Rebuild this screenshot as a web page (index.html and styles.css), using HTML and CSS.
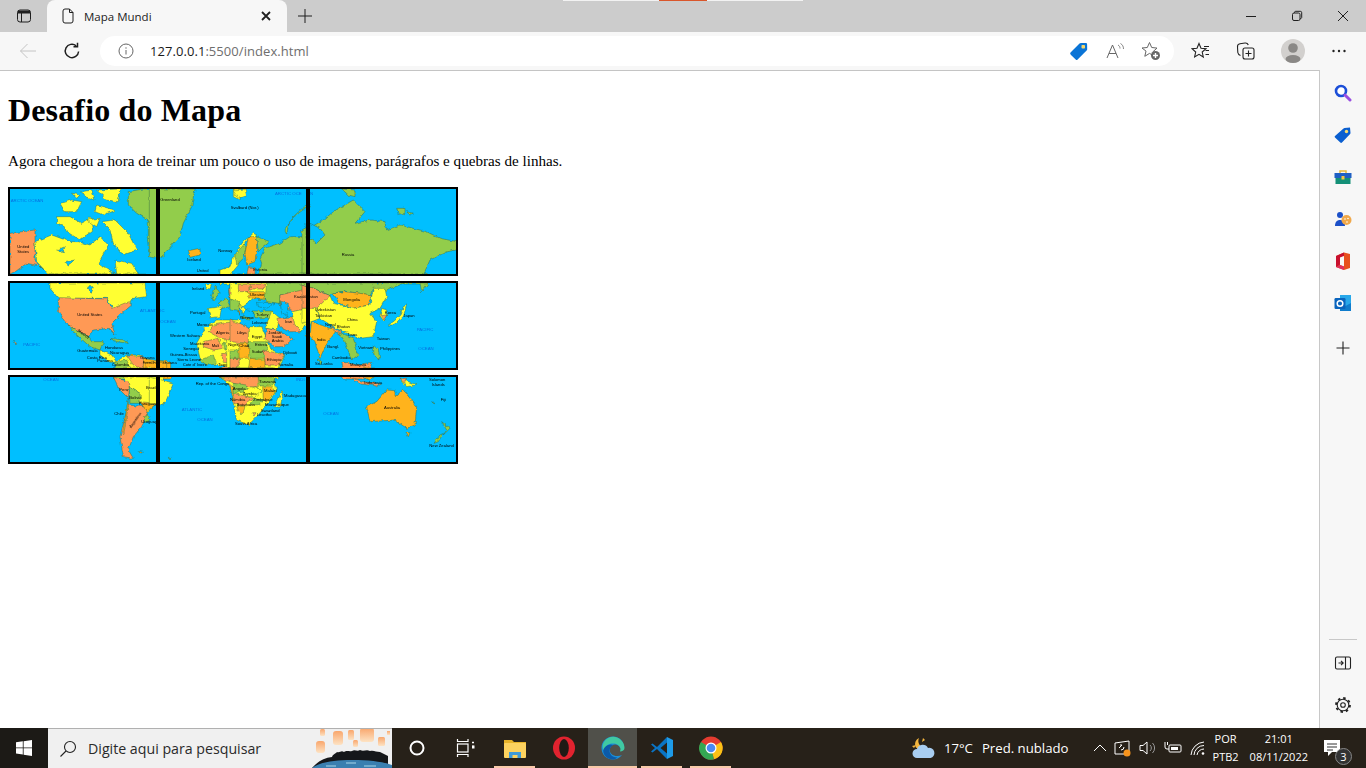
FILE: index.html
```html
<!DOCTYPE html>
<html lang="pt-BR">
<head>
    <meta charset="UTF-8">
    <meta name="viewport" content="width=device-width, initial-scale=1.0">
    <title>Mapa Mundi</title>
    <link rel="stylesheet" href="styles.css">
</head>
<body>

<div class="top-sliver"><span class="sliver-mid"></span></div>

<!-- barra de abas -->
<div class="tabstrip">
    <div class="tab-side">
        <svg width="16" height="16" viewBox="0 0 16 16" class="ico"><rect x="1.5" y="2" width="13" height="12" rx="2.5"/><path d="M1.5 5h13M5.5 5v9" /><path d="M2 2.6h12v2.4H2z" class="solid"/></svg>
    </div>
    <div class="tab">
        <svg width="16" height="16" viewBox="0 0 16 16" class="ico"><path d="M3 3a2 2 0 0 1 2-2h4.5L13 4.5V13a2 2 0 0 1-2 2H5a2 2 0 0 1-2-2z"/><path d="M9.5 1v3.5H13"/></svg>
        <span class="tab-title">Mapa Mundi</span>
        <svg width="10" height="10" viewBox="0 0 10 10" class="ico thick"><path d="M1 1l8 8M9 1l-8 8"/></svg>
    </div>
    <div class="new-tab">
        <svg width="16" height="16" viewBox="0 0 16 16" class="ico"><path d="M8 1v14M1 8h14"/></svg>
    </div>
    <div class="win-controls">
        <div class="win-btn"><svg width="12" height="12" viewBox="0 0 12 12" class="ico"><path d="M1 6.5h10"/></svg></div>
        <div class="win-btn"><svg width="12" height="12" viewBox="0 0 12 12" class="ico"><rect x="1.5" y="3" width="7.5" height="7.5" rx="1.5"/><path d="M3.5 3V2.5a1.2 1.2 0 0 1 1.2-1.2h4.6a1.4 1.4 0 0 1 1.4 1.4v4.6A1.2 1.2 0 0 1 9 8.5"/></svg></div>
        <div class="win-btn"><svg width="12" height="12" viewBox="0 0 12 12" class="ico"><path d="M1 1l10 10M11 1L1 11"/></svg></div>
    </div>
</div>

<!-- barra de endereco -->
<div class="toolbar">
    <div class="tool tool-back">
        <svg width="18" height="18" viewBox="0 0 18 18" class="ico faded"><path d="M17 9H1.5M8.5 2L1.5 9l7 7"/></svg>
    </div>
    <div class="tool">
        <svg width="18" height="18" viewBox="0 0 18 18" class="ico big"><path d="M15.6 9.5A6.7 6.7 0 1 1 13.2 3.8"/><path d="M14.5 0.8v4h-4"/></svg>
    </div>
    <div class="address">
        <svg width="16" height="16" viewBox="0 0 16 16" class="ico grey addr-info"><circle cx="8" cy="8" r="7"/><path d="M8 7v4.5M8 4.3v1.4"/></svg>
        <span class="url"><b>127.0.0.1</b>:5500/index.html</span>
        <div class="addr-icons">
            <svg width="20" height="20" viewBox="0 0 20 20"><path d="M1.5 11.5L10.5 2.5a2 2 0 0 1 1.4-.6l5 .1a1.2 1.2 0 0 1 1.2 1.2l.1 5a2 2 0 0 1-.6 1.4l-9 9a1.3 1.3 0 0 1-1.9 0l-4.700-4.700a1.700 1.700 0 0 1-.5-2.400z" fill="#0a74d6"/><rect x="12.500" y="4" width="3.500" height="3.500" rx=".8" fill="#f5d76a"/></svg>
            <svg width="20" height="20" viewBox="0 0 20 20" class="ico grey"><path d="M2 17L7.500 4 13 17M4 12.500h7"/><path d="M13 4c1.500.8 2 2 2 3.500M15.500 2.500c2 1.200 3 3 3 5.500" class="thin"/></svg>
            <svg width="20" height="20" viewBox="0 0 20 20" class="ico grey"><path d="M8.500 1.500l2.200 5 5.300.6-4 3.600 1 4.200-4.500-2.500-4.700 2.900 1.200-5.200L1 7l5.300-.5z"/><circle cx="14.500" cy="14.500" r="4.500" fill="#666" stroke="none"/><path d="M14.500 12v5M12 14.500h5" class="white"/></svg>
        </div>
    </div>
    <div class="tool-right">
        <svg width="20" height="20" viewBox="0 0 20 20" class="ico dark"><path d="M8 2.500l2 4.700 5 .5-3.800 3.300 1.100 5-4.300-2.600-4.400 2.600 1.100-5L1 7.700l5-.5z"/><path d="M13 5.500h5M14.500 9.500h3.500M14.500 13.500h3.500"/></svg>
        <svg width="20" height="20" viewBox="0 0 20 20" class="ico dark"><rect x="7" y="7" width="11" height="11" rx="2"/><path d="M12.500 9.500v6M9.500 12.500h6M4.500 14.500C3 14 2 12.800 1.800 11.500L1.500 6a3 3 0 0 1 2.500-3.300L9 2c1.500-.2 2.800.7 3.300 2"/></svg>
        <div class="avatar">
            <svg width="24" height="24" viewBox="0 0 24 24"><circle cx="12" cy="12" r="12" fill="#d2d0ce"/><circle cx="12" cy="9" r="4.800" fill="#8a8886"/><ellipse cx="12" cy="20" rx="7.500" ry="4" fill="#8a8886"/></svg>
        </div>
        <svg width="20" height="20" viewBox="0 0 20 20" class="dots"><circle cx="4.500" cy="10" r="1.200"/><circle cx="10" cy="10" r="1.200"/><circle cx="15.500" cy="10" r="1.200"/></svg>
    </div>
</div>

<div class="main">
    <div class="page">
        <h1>Desafio do Mapa</h1>
        <p>Agora chegou a hora de treinar um pouco o uso de imagens, parágrafos e quebras de linhas.</p>

        <!-- os continentes ficam uma vez so, cada quadro recorta um pedaco -->
        <svg class="world-def" width="0" height="0">
            <filter id="rough" x="-30%" y="-30%" width="160%" height="160%">
                <feTurbulence type="fractalNoise" baseFrequency=".08" numOctaves="2" seed="4"/>
                <feDisplacementMap in="SourceGraphic" scale="11" xChannelSelector="R" yChannelSelector="G"/>
            </filter>
            <symbol id="world" viewBox="0 0 438 255" width="438" height="255">
                <g class="land" transform="translate(-10 -9) scale(.3333)">
                    <polygon class="o" points="30,160 105,150 105,245 135,272 120,258 80,250 50,272 30,282"/>
                    <polygon class="y" points="105,185 155,165 210,185 235,185 270,195 300,170 325,195 295,250 345,282 145,282 110,245"/>
                    <polygon class="y" points="180,70 215,60 245,65 230,95 195,95"/>
                    <polygon class="y" points="215,40 240,45 230,55"/>
                    <polygon class="y" points="245,35 275,30 285,60 255,50"/>
                    <polygon class="y" points="290,30 360,27 355,65 320,60"/>
                    <polygon class="y" points="290,75 345,90 310,105 285,95"/>
                    <polygon class="y" points="170,110 210,110 245,130 265,115 275,115 280,150 240,180 200,155 190,135 170,130"/>
                    <polygon class="y" points="305,125 345,120 385,160 410,210 370,225 340,190 330,150"/>
                    <polygon class="y" points="260,120 300,115 290,140"/>
                    <polygon class="y" points="345,240 395,250 415,282 350,282"/>
                    <polygon class="s" points="170,210 195,200 190,215"/>
                    <polygon class="s" points="195,245 225,240 205,255"/>
                    <polygon class="g" points="385,35 430,27 480,27 480,235 468,225 450,225 445,170 445,120 410,100 385,75"/>
                </g>
                <g class="land" transform="translate(-14 -9) scale(.3333)">
                    <polygon class="g" points="460,27 585,27 575,80 550,130 540,170 480,235 460,230"/>
                    <polygon class="a" points="565,212 600,205 600,225 570,232"/>
                    <polygon class="y" points="700,27 720,27 720,60 700,50"/>
                </g>
                <g class="land" transform="translate(216 -9) scale(.3333)">
                    <polygon class="y" points="8,30 45,27 50,48 25,55"/>
                    <polygon class="g" points="228,170 240,285 85,285 95,250 90,235 105,205 150,190 180,170"/>
                    <polygon class="y" points="-30,270 0,260 15,220 40,185 70,160 80,165 50,180 30,220 25,255 0,285 -30,285"/>
                    <polygon class="g" points="15,225 40,195 50,200 40,235 20,255"/>
                    <polygon class="a" points="55,170 80,170 80,210 75,245 50,255 45,220"/>
                    <polygon class="g" points="80,170 120,185 95,205 85,215"/>
                    <polygon class="o" points="55,262 75,262 75,285 50,285"/>
                    <polygon class="g" points="170,160 180,120 225,85 228,75 190,110 165,150"/>
                </g>
                <g class="land" transform="translate(212 -9) scale(.3333)">
                    <polygon class="g" points="228,150 280,120 310,95 370,60 405,95 375,130 420,120 465,125 470,150 510,135 590,155 630,175 680,185 680,210 650,215 600,240 580,285 228,285"/>
                    <polygon class="s" points="240,130 270,145 285,165 260,190 240,175"/>
                    <polygon class="g" points="500,85 525,85 525,100 505,103"/>
                    <polygon class="g" points="335,27 375,30 375,50 355,45"/>
                    <polygon class="g" points="530,95 550,100 540,105"/>
                </g>
                <g class="land" transform="translate(-10 77) scale(.3333)">
                    <polygon class="y" points="150,24 435,24 440,65 400,70 390,85 340,100 320,70 175,70 150,40"/>
                    <polygon class="s" points="262,35 280,35 275,55"/>
                    <polygon class="o" points="175,68 320,72 335,100 385,80 395,90 360,120 335,145 345,180 325,160 280,165 265,185 205,150 175,110"/>
                    <polygon class="g" points="205,150 265,185 275,200 310,200 300,225 270,215 225,175"/>
                    <polygon class="y" points="300,225 335,240 350,262 330,262 300,240"/>
                    <polygon class="g" points="330,190 370,195 385,205 350,200"/>
                    <polygon class="y" points="345,262 380,240 420,240 420,285 345,285"/>
                    <polygon class="o" points="380,240 430,245 450,260 430,285 400,270"/>
                    <polygon class="g" points="345,262 380,255 395,285 345,285"/>
                    <polygon class="a" points="430,250 500,262 500,285 430,285"/>
                    <polygon class="o" points="40,200 50,205 48,210"/>
                </g>
                <g class="land" transform="translate(-14 77) scale(.3333)">
                    <polygon class="a" points="450,262 500,262 500,285 450,285"/>
                    <polygon class="y" points="590,205 615,160 650,135 720,135 720,285 640,265 600,250"/>
                    <polygon class="o" points="640,150 695,140 700,195 660,190 625,170"/>
                    <polygon class="o" points="610,200 655,190 670,220 640,225 610,215"/>
                    <polygon class="g" points="670,205 720,195 720,230 675,225"/>
                    <polygon class="o" points="665,235 720,240 710,265 670,262"/>
                    <polygon class="g" points="600,255 640,240 650,268 620,270"/>
                    <polygon class="y" points="625,100 665,95 660,125 630,128"/>
                    <polygon class="g" points="645,30 660,55 640,80 635,60"/>
                    <polygon class="y" points="620,30 635,28 630,42 618,40"/>
                    <polygon class="g" points="655,85 680,70 690,95 665,100"/>
                    <polygon class="o" points="685,40 720,40 720,65 690,70"/>
                    <polygon class="y" points="690,30 720,24 720,40 690,40"/>
                    <polygon class="o" points="690,70 720,75 720,120 705,85"/>
                </g>
                <g class="land" transform="translate(216 77) scale(.3333)">
                    <polygon class="g" points="100,24 240,24 240,50 150,60 150,85 110,80 95,40"/>
                    <polygon class="y" points="0,24 110,24 105,75 70,70 30,100 0,90"/>
                    <polygon class="o" points="25,28 60,28 60,50 25,50"/>
                    <polygon class="o" points="60,28 105,28 100,42 62,42"/>
                    <polygon class="a" points="50,50 105,50 105,72 80,72 60,68"/>
                    <polygon class="o" points="150,60 240,40 240,100 195,110 150,90"/>
                    <polygon class="g" points="0,72 28,80 28,110 0,105"/>
                    <polygon class="y" points="-10,195 60,155 95,155 125,225 165,240 145,285 -10,285"/>
                    <polygon class="o" points="0,135 55,155 55,205 0,200"/>
                    <polygon class="a" points="25,205 58,205 55,250 28,250"/>
                    <polygon class="g" points="55,200 110,200 115,250 60,250"/>
                    <polygon class="o" points="100,225 165,240 145,270 105,270"/>
                    <polygon class="o" points="0,250 30,250 20,285 0,285"/>
                    <polygon class="g" points="0,225 25,225 25,250 0,250"/>
                    <polygon class="a" points="60,250 105,255 105,285 55,285"/>
                    <polygon class="g" points="70,108 128,108 125,128 75,128"/>
                    <polygon class="y" points="125,108 150,130 140,165 105,160"/>
                    <polygon class="o" points="140,130 190,125 215,170 175,170 150,155"/>
                    <polygon class="o" points="110,160 150,170 190,192 160,215 130,215 105,190"/>
                    <polygon class="y" points="185,110 240,100 240,130 215,170 195,150"/>
                    <polygon class="s" points="82,80 135,85 110,100 85,95"/>
                    <polygon class="s" points="150,78 175,85 170,125 155,115"/>
                    <polygon class="s" points="30,100 70,108 70,130 30,125"/>
                    <polygon class="y" points="28,85 45,105 40,118"/>
                    <polygon class="g" points="35,125 60,128 60,135 38,132"/>
                </g>
                <g class="land" transform="translate(212 77) scale(.3333)">
                    <polygon class="g" points="228,24 525,24 470,45 430,40 420,60 345,48 305,55 300,62 228,30"/>
                    <polygon class="o" points="228,30 300,62 300,85 260,100 228,100"/>
                    <polygon class="y" points="228,100 260,100 270,130 245,140 228,145"/>
                    <polygon class="a" points="305,55 345,50 390,55 425,60 415,90 370,100 330,85"/>
                    <polygon class="y" points="260,100 300,62 310,85 370,100 420,90 430,40 465,40 470,65 450,100 420,115 440,140 430,185 390,190 340,170 310,155 270,130"/>
                    <polygon class="a" points="245,140 300,160 320,165 285,215 270,250 255,200 240,180"/>
                    <polygon class="o" points="300,155 335,170 330,180 310,165"/>
                    <polygon class="g" points="325,170 370,190 385,240 365,255 345,200"/>
                    <polygon class="y" points="455,100 470,105 470,120 460,140 450,125"/>
                    <polygon class="o" points="452,122 470,120 462,135"/>
                    <polygon class="y" points="475,150 510,120 520,95 530,90 520,125 490,150"/>
                    <polygon class="g" points="430,210 445,225 450,255 432,240"/>
                    <polygon class="o" points="335,260 380,270 425,262 420,285 340,285"/>
                    <polygon class="g" points="265,255 275,258 272,270"/>
                    <polygon class="g" points="570,24 595,24 575,50"/>
                </g>
                <g class="land" transform="translate(-10 163) scale(.3333)">
                    <polygon class="y" points="370,21 480,21 480,105 468,100 440,130 420,95 420,70 388,50"/>
                    <polygon class="o" points="340,21 385,35 388,55 385,85 360,60"/>
                    <polygon class="g" points="388,50 420,70 420,100 390,100"/>
                    <polygon class="a" points="420,95 470,100 440,125"/>
                    <polygon class="o" points="385,105 430,110 445,130 425,170 400,200 385,240 400,265 370,260 360,200"/>
                    <polygon class="a" points="385,85 385,105 372,190 368,190"/>
                    <polygon class="g" points="430,140 445,135 450,150 435,158"/>
                    <polygon class="a" points="418,245 430,247 420,250"/>
                </g>
                <g class="land" transform="translate(-14 163) scale(.3333)">
                    <polygon class="y" points="460,21 520,40 495,100 460,105"/>
                    <polygon class="g" points="505,262 515,268 508,268"/>
                    <polygon class="o" points="660,21 720,21 720,50 690,50 680,35"/>
                    <polygon class="a" points="690,50 720,50 720,125 700,90"/>
                </g>
                <g class="land" transform="translate(216 163) scale(.3333)">
                    <polygon class="y" points="-30,21 130,21 140,60 115,100 80,140 55,165 20,150 10,100 8,50"/>
                    <polygon class="o" points="-30,21 85,21 85,50 35,50 10,40"/>
                    <polygon class="g" points="85,21 135,21 130,45 90,48"/>
                    <polygon class="g" points="10,40 50,45 50,65 10,70"/>
                    <polygon class="y" points="40,60 80,50 95,65 75,80 45,80"/>
                    <polygon class="a" points="98,50 125,50 135,65 110,95 100,90"/>
                    <polygon class="o" points="10,70 45,78 70,85 40,108 12,100"/>
                    <polygon class="g" points="70,85 100,90 85,105 60,102"/>
                    <polygon class="a" points="20,110 45,108 40,130 30,130"/>
                    <polygon class="o" points="65,128 78,128 72,138"/>
                    <polygon class="y" points="135,110 155,65 160,70 150,112"/>
                </g>
                <g class="land" transform="translate(212 163) scale(.3333)">
                    <polygon class="a" points="410,110 440,95 470,60 495,62 495,80 520,60 560,110 555,165 530,175 495,150 420,155"/>
                    <polygon class="a" points="528,188 540,188 535,200"/>
                    <polygon class="o" points="360,21 400,35 455,42 440,48 390,42"/>
                    <polygon class="a" points="400,21 430,21 420,30"/>
                    <polygon class="y" points="510,25 560,45 530,50"/>
                    <polygon class="o" points="510,25 530,25 525,38"/>
                    <polygon class="g" points="635,155 660,175 640,195 650,180"/>
                    <polygon class="g" points="640,190 625,215 612,220 630,195"/>
                    <polygon class="g" points="605,95 618,102 610,100"/>
                </g>
            </symbol>
        </svg>

        <div class="map">
            <svg class="tile" viewBox="0 0 146 85">
                <use href="#world"/>
                <g class="labels" transform="translate(-10 -9) scale(.3333)">
                    <text class="oc" x="32" y="66">ARCTIC OCEAN</text>
                    <text class="lb" x="52" y="204">United</text>
                    <text class="lb" x="52" y="219">States</text>
                </g>
            </svg>
            <svg class="tile" viewBox="146 0 146 85">
                <use href="#world"/>
                <g class="labels" transform="translate(-14 -9) scale(.3333)">
                    <text class="lb" x="481" y="64">Greenland</text>
                    <text class="lb" x="562" y="242">Iceland</text>
                    <text class="lb" x="655" y="215">Norway</text>
                    <text class="lb" x="590" y="276">United</text>
                </g>
                <g class="labels" transform="translate(216 -9) scale(.3333)">
                    <text class="lb" x="2" y="86">Svalbard (Nor.)</text>
                    <text class="oc" x="135" y="44">ARCTIC OCE</text>
                    <text class="lb" x="70" y="272">Estonia</text>
                </g>
            </svg>
            <svg class="tile" viewBox="292 0 146 85">
                <use href="#world"/>
                <g class="labels" transform="translate(212 -9) scale(.3333)">
                    <text class="oc" x="240" y="44">N</text>
                    <text class="lb" x="335" y="228">Russia</text>
                </g>
            </svg>

            <svg class="tile" viewBox="0 85 146 85">
                <use href="#world"/>
                <g class="labels" transform="translate(-10 77) scale(.3333)">
                    <text class="lb" x="232" y="122">United States</text>
                    <text class="oc" x="70" y="214">PACIFIC</text>
                    <text class="oc" x="420" y="112">ATLANT</text>
                    <text class="lb" x="232" y="232">Guatemala</text>
                    <text class="lb" x="315" y="222">Honduras</text>
                    <text class="lb" x="330" y="236">Nicaragua</text>
                    <text class="lb" x="260" y="251">Costa Rica</text>
                    <text class="lb" x="292" y="262">Panama</text>
                    <text class="lb" x="335" y="274">Colombia</text>
                    <text class="lb" x="420" y="251">Guyana</text>
                    <text class="lb" x="428" y="266">French</text>
                    <text class="lb" transform="rotate(35 235 165)" x="235" y="170">Mexico</text>
                </g>
            </svg>
            <svg class="tile" viewBox="146 85 146 85">
                <use href="#world"/>
                <g class="labels" transform="translate(-14 77) scale(.3333)">
                    <text class="oc" x="481" y="112">IC</text>
                    <text class="oc" x="481" y="145">OCEAN</text>
                    <text class="lb" x="490" y="266">Guiana</text>
                    <text class="lb" x="575" y="44">Ireland</text>
                    <text class="lb" x="570" y="117">Portugal</text>
                    <text class="lb" x="590" y="154">Morocco</text>
                    <text class="lb" x="510" y="187">Western Sahara</text>
                    <text class="lb" x="570" y="211">Mauritania</text>
                    <text class="lb" x="550" y="225">Senegal</text>
                    <text class="lb" x="510" y="244">Guinea-Bissau</text>
                    <text class="lb" x="532" y="257">Sierra Leone</text>
                    <text class="lb" x="548" y="274">Cote d' Ivoire</text>
                    <text class="lb" x="655" y="274">Togo</text>
                    <text class="lb" x="648" y="176">Algeria</text>
                    <text class="lb" x="635" y="217">Mali</text>
                    <text class="lb" x="685" y="212">Niger</text>
                </g>
                <g class="labels" transform="translate(216 77) scale(.3333)">
                    <text class="lb" x="60" y="62">Ukraine</text>
                    <text class="lb" x="78" y="122">Turkey</text>
                    <text class="lb" x="165" y="144">Iran</text>
                    <text class="lb" x="30" y="132">Greece</text>
                    <text class="lb" x="65" y="147">Lebanon</text>
                    <text class="lb" x="20" y="177">Libya</text>
                    <text class="lb" x="65" y="189">Egypt</text>
                    <text class="lb" x="115" y="176">Jordan</text>
                    <text class="lb" x="125" y="189">Saudi</text>
                    <text class="lb" x="125" y="202">Arabia</text>
                    <text class="lb" x="75" y="212">Eritrea</text>
                    <text class="lb" x="65" y="234">Sudan</text>
                    <text class="lb" x="28" y="216">Chad</text>
                    <text class="lb" x="110" y="259">Ethiopia</text>
                    <text class="lb" x="160" y="236">Djibouti</text>
                    <text class="lb" x="145" y="274">Somalia</text>
                    <text class="lb" x="192" y="70">Kazakh</text>
                </g>
            </svg>
            <svg class="tile" viewBox="292 85 146 85">
                <use href="#world"/>
                <g class="labels" transform="translate(212 77) scale(.3333)">
                    <text class="lb" x="240" y="70">stan</text>
                    <text class="lb" x="340" y="78">Mongolia</text>
                    <text class="lb" x="350" y="139">China</text>
                    <text class="lb" x="260" y="199">India</text>
                    <text class="lb" x="285" y="154">Nepal</text>
                    <text class="lb" x="320" y="160">Bhutan</text>
                    <text class="lb" x="355" y="182">Laos</text>
                    <text class="lb" x="465" y="117">Korea</text>
                    <text class="lb" x="520" y="126">Japan</text>
                    <text class="lb" x="440" y="194">Taiwan</text>
                    <text class="lb" x="385" y="222">Vietnam</text>
                    <text class="lb" x="450" y="226">Philippines</text>
                    <text class="lb" x="305" y="252">Cambodia</text>
                    <text class="lb" x="292" y="219">Bangl.</text>
                    <text class="lb" x="255" y="269">Sri Lanka</text>
                    <text class="lb" x="360" y="274">Malaysia</text>
                    <text class="lb" x="255" y="109">Uzbekistan</text>
                    <text class="lb" x="255" y="126">Tajikistan</text>
                    <text class="oc" x="560" y="167">PACIFIC</text>
                    <text class="oc" x="565" y="224">OCEAN</text>
                </g>
            </svg>

            <svg class="tile" viewBox="0 170 146 85">
                <use href="#world"/>
                <g class="labels" transform="translate(-10 163) scale(.3333)">
                    <text class="oc" x="130" y="33">OCEAN</text>
                    <text class="lb" x="438" y="56">Brazil</text>
                    <text class="lb" x="358" y="64">Peru</text>
                    <text class="lb" x="388" y="86">Bolivia</text>
                    <text class="lb" x="416" y="106">Paraguay</text>
                    <text class="lb" x="343" y="134">Chile</text>
                    <text class="lb" x="424" y="159">Uruguay</text>
                    <text class="lb" transform="rotate(-55 405 150)" x="378" y="154">Argentina</text>
                </g>
            </svg>
            <svg class="tile" viewBox="146 170 146 85">
                <use href="#world"/>
                <g class="labels" transform="translate(-14 163) scale(.3333)">
                    <text class="lb" x="587" y="46">Rep. of the Congo</text>
                    <text class="oc" x="545" y="122">ATLANTIC</text>
                    <text class="oc" x="592" y="154">OCEAN</text>
                </g>
                <g class="labels" transform="translate(216 163) scale(.3333)">
                    <text class="lb" x="88" y="39">Tanzania</text>
                    <text class="lb" x="8" y="59">Angola</text>
                    <text class="lb" x="38" y="74">Zambia</text>
                    <text class="lb" x="0" y="94">Namibia</text>
                    <text class="lb" x="20" y="109">Botswana</text>
                    <text class="lb" x="70" y="92">Zimbabwe</text>
                    <text class="lb" x="102" y="66">Malawi</text>
                    <text class="lb" x="162" y="82">Madagascar</text>
                    <text class="lb" x="105" y="107">Mozambique</text>
                    <text class="lb" x="92" y="126">Swaziland</text>
                    <text class="lb" x="80" y="139">Lesotho</text>
                    <text class="lb" x="15" y="164">South Africa</text>
                    <text class="oc" x="198" y="33">INDI</text>
                </g>
            </svg>
            <svg class="tile" viewBox="292 170 146 85">
                <use href="#world"/>
                <g class="labels" transform="translate(212 163) scale(.3333)">
                    <text class="oc" x="280" y="134">OCEAN</text>
                    <text class="lb" x="462" y="116">Australia</text>
                    <text class="lb" x="403" y="42">Indonesia</text>
                    <text class="lb" x="597" y="34">Solomon</text>
                    <text class="lb" x="605" y="47">Islands</text>
                    <text class="lb" x="632" y="92">Fiji</text>
                    <text class="lb" x="598" y="232">New Zealand</text>
                </g>
            </svg>
        </div>
    </div>

    <!-- barra lateral do edge -->
    <div class="sidebar">
        <div class="side-top">
            <svg width="18" height="18" viewBox="0 0 18 18"><circle cx="7" cy="7" r="5" fill="#fff" stroke="#1c4fd8" stroke-width="2.600"/><path d="M11 11l5 5" stroke="#9a4fe0" stroke-width="3" stroke-linecap="round"/></svg>
            <svg width="18" height="18" viewBox="0 0 18 18"><path d="M1 10L9.500 2.500a1.500 1.500 0 0 1 1-.4l5.500-.6.500 5.500a1.500 1.500 0 0 1-.4 1L8 16.500a1.200 1.200 0 0 1-1.700 0L1 11.500a1 1 0 0 1 0-1.500z" fill="#0b5fd0"/><circle cx="12.500" cy="5.500" r="1.700" fill="#f7dc6f"/></svg>
            <svg width="18" height="18" viewBox="0 0 18 18"><path d="M6 5V3h6v2" fill="none" stroke="#e8b93c" stroke-width="1.500"/><rect x="0.500" y="5" width="17" height="5" fill="#1f5fc4"/><rect x="1.500" y="10" width="15" height="6" fill="#149077"/><rect x="7.500" y="8" width="3" height="3.500" fill="#f3c744"/></svg>
            <svg width="18" height="18" viewBox="0 0 18 18"><circle cx="6" cy="5" r="3" fill="#1c50c8"/><path d="M1 16c0-4 2-6 5-6s5 2 5 6z" fill="#1c50c8"/><circle cx="12.500" cy="10" r="5" fill="#f0a84a"/><circle cx="11" cy="9" r=".8" fill="#fff"/><circle cx="14" cy="8.500" r=".8" fill="#fff"/><circle cx="13" cy="12" r=".8" fill="#fff"/></svg>
            <svg width="18" height="18" viewBox="0 0 18 18"><path d="M2 4l8-3.500L16 2v14l-6 2-8-3z" fill="#e8501e"/><path d="M2 4l8-3.500v3.500L6 5.500v7L2 15z" fill="#c8102e"/><path d="M6 5.500L10 4v10.500L6 13z" fill="#f7f7f7"/><path d="M2 15l8 3v-3.500L6 13z" fill="#e02f60"/></svg>
            <svg width="18" height="18" viewBox="0 0 18 18"><rect x="6" y="1" width="11" height="15" fill="#28a8ea"/><path d="M6 9l5.500 3L17 9v8H6z" fill="#0f7ccc"/><rect x="0.500" y="4" width="11" height="11" rx="1.200" fill="#0a64bd"/><circle cx="6" cy="9.500" r="2.800" fill="none" stroke="#fff" stroke-width="1.500"/></svg>
            <svg width="18" height="18" viewBox="0 0 18 18" class="ico dark side-plus"><path d="M9 2.500v13M2.500 9h13"/></svg>
        </div>
        <div class="side-bottom">
            <svg width="18" height="18" viewBox="0 0 18 18" class="ico dark"><rect x="1.500" y="3" width="15" height="12" rx="1.500"/><path d="M11.500 3v12M4.500 9h4.500M7 6.800L9.200 9 7 11.200"/></svg>
            <svg width="18" height="18" viewBox="0 0 18 18" class="ico dark"><circle cx="9" cy="9" r="2.300"/><circle cx="9" cy="9" r="5.800"/><circle class="gear-teeth" cx="9" cy="9" r="7"/></svg>
        </div>
    </div>
</div>

<!-- barra de tarefas do windows -->
<div class="taskbar">
    <div class="start">
        <svg width="16" height="16" viewBox="0 0 16 16" fill="#fff"><path d="M0 2.300l6.800-1v6.200H0zM7.600 1.200L16 0v7.500H7.600zM0 8.300h6.800v6.300l-6.800-1zM7.600 8.300H16V16l-8.400-1.200z"/></svg>
    </div>
    <div class="search">
        <svg width="18" height="18" viewBox="0 0 18 18" class="ico dark"><circle cx="11" cy="7" r="5.500"/><path d="M7 11l-5.500 5.500"/></svg>
        <span class="search-text">Digite aqui para pesquisar</span>
        <svg class="lanterns" width="80" height="40" viewBox="0 0 80 40">
            <defs>
                <linearGradient id="lamp" x1="0" y1="0" x2="0" y2="1"><stop offset="0" stop-color="#f9a66c"/><stop offset="1" stop-color="#fde3c4"/></linearGradient>
            </defs>
            <rect x="8" y="1" width="5" height="7" rx="1.500" fill="url(#lamp)"/>
            <rect x="21" y="3" width="10" height="14" rx="3" fill="url(#lamp)"/>
            <rect x="36" y="2" width="6" height="10" rx="1.500" fill="url(#lamp)"/>
            <rect x="48" y="0" width="14" height="14" rx="3" fill="url(#lamp)"/>
            <rect x="66" y="9" width="7" height="9" rx="1.500" fill="url(#lamp)"/>
            <rect x="4" y="13" width="9" height="12" rx="3" fill="url(#lamp)"/>
            <rect x="41" y="12" width="5" height="7" rx="1.500" fill="url(#lamp)"/>
            <rect x="75" y="3" width="3" height="4" fill="url(#lamp)"/>
            <path d="M0 40c6-7 12-10 20-11 1-3 3-3 5-5 3 1 4-2 7 0 3-2 5 0 8-1 3-2 5 1 8-1 4 2 6-1 10 1 4-1 6 1 10 1l8 4v13z" fill="#15171a"/>
            <path d="M0 40c8-6 22-8 40-8s32 2 40 5v3z" fill="#3a7fb0"/>
            <path d="M14 38h10M34 35h10M52 38h12" stroke="#a8d8ea" stroke-width="1"/>
        </svg>
    </div>
    <div class="task-btn">
        <svg width="20" height="20" viewBox="0 0 20 20"><circle cx="10" cy="10" r="6.500" fill="none" stroke="#fff" stroke-width="2"/></svg>
    </div>
    <div class="task-btn">
        <svg width="20" height="20" viewBox="0 0 20 20" fill="none" stroke="#fff" stroke-width="1.200"><path d="M1.500 1v2.500H12V1M1.500 19v-2.500H12V19"/><rect x="1.500" y="6" width="10.500" height="8"/><path d="M16 4.500h2M16 8.500h2" stroke-width="1.500"/><rect x="16" y="7.500" width="2.500" height="3" fill="#fff" stroke="none"/></svg>
    </div>
    <div class="task-btn running">
        <svg width="24" height="24" viewBox="0 0 24 24"><path d="M1 4h8l2 2h12v5H1z" fill="#e7b32a"/><rect x="1" y="7" width="22" height="15" rx="1" fill="#fcd25f"/><path d="M6 22v-6h12v6h-3.500v-3h-5v3z" fill="#3f9ad8"/></svg>
    </div>
    <div class="task-btn">
        <svg width="24" height="24" viewBox="0 0 24 24"><ellipse cx="12" cy="12" rx="11" ry="11.500" fill="#e1232f"/><ellipse cx="12" cy="12" rx="4.800" ry="9" fill="#1f1a15"/></svg>
    </div>
    <div class="task-btn running active">
        <svg width="24" height="24" viewBox="0 0 24 24"><path d="M12 0.500C5.500.5.500 5.700.500 12c0 6.500 5 11.500 11 11.500 4 0 7-1.500 9.500-4.500-3 1.500-8 1.500-10.500-1-2.500-2.500-2.500-6 .5-8.500 2.500-2 7.500-1 8 2.500h4C23.500 6 18.500.5 12 .500z" fill="#1a8fd8"/><path d="M3 6C6 1 12 0 16 1.500c4.500 1.800 7.500 6 7.500 10.500 0 2-2 3.500-4.500 3.500 1-2 .5-5-2-6.500-3-2-8-2-11 .5C4.500 11 3 13 2.500 14.500 1 11 1.500 8 3 6z" fill="#40c9a2"/><path d="M12 23.500c-5 0-10-4-9.800-9 .8-4 6-7.500 10-5.500-3 1.500-4.500 5-3 8.500 1 2.500 4 4 7 4-1.200 1.200-2.500 2-4.200 2z" fill="#0c5aa8"/></svg>
    </div>
    <div class="task-btn running">
        <svg width="24" height="24" viewBox="0 0 24 24"><path d="M17 1l6 3v16l-6 3z" fill="#1e9be8"/><path d="M17 1L7 11 2.500 7.500 1 8.500 5 12l-4 3.500 1.500 1L7 13l10 10v-5.500L10.500 12 17 6.500z" fill="#0a74c4"/></svg>
    </div>
    <div class="task-btn running">
        <svg width="24" height="24" viewBox="0 0 24 24"><circle cx="12" cy="12" r="11.500" fill="#e53c30"/><path d="M12 12L22 6a11.500 11.500 0 0 1-7 17.200z" fill="#fbc116"/><path d="M12 12l3 11.200A11.500 11.500 0 0 1 2 6z" fill="#34a853"/><circle cx="12" cy="12" r="5.500" fill="#fff"/><circle cx="12" cy="12" r="4.300" fill="#4a8af4"/></svg>
    </div>

    <div class="tray">
        <svg class="weather" width="26" height="24" viewBox="0 0 26 24"><path d="M8 2a7 7 0 0 0 6 10 7 7 0 0 1-9.500-1A7 7 0 0 1 8 2z" fill="#f4b63f"/><path d="M1 10l4-1-2 3zM12 2l-1 4 3-2z" fill="#f4b63f"/><path d="M6 22a4.500 4.500 0 0 1 0-9 6 6 0 0 1 11-1 5 5 0 0 1 2.500 10z" fill="#a8cdf0"/></svg>
        <span class="temp">17°C</span>
        <span class="forecast">Pred. nublado</span>
        <svg class="tray-ico chevron" width="14" height="14" viewBox="0 0 14 14"><path d="M1 10l6-6 6 6"/></svg>
        <svg class="tray-ico" width="18" height="18" viewBox="0 0 18 18"><path d="M1 4l14-2v13H1z"/><path d="M5 9l3-3M8 6h-2M10 8a3 3 0 0 1-3 3"/><circle cx="13" cy="14" r="3.500" fill="#f7941d" stroke="none"/></svg>
        <svg class="tray-ico" width="18" height="18" viewBox="0 0 18 18"><path d="M1 6.500h3L8 3v12L4 11.500H1z"/><path d="M11 6a4 4 0 0 1 0 6M13.500 4a7 7 0 0 1 0 10" class="dim"/></svg>
        <svg class="tray-ico" width="18" height="18" viewBox="0 0 18 18"><rect x="5" y="6" width="12" height="7" rx="1"/><rect x="7" y="8" width="7" height="3" fill="#fff" stroke="none"/><path d="M1 6v2a2 2 0 0 0 2 2h2M1 3v3M3.500 3v3"/></svg>
        <svg class="tray-ico" width="18" height="18" viewBox="0 0 18 18"><path d="M2 16A14 14 0 0 1 15 3M5 16A10 10 0 0 1 15 6.500M8 16a7 7 0 0 1 7-6"/><circle cx="14" cy="14.500" r="1.300" fill="#fff" stroke="none"/></svg>
        <div class="lang"><span>POR</span><span>PTB2</span></div>
        <div class="clock"><span>21:01</span><span>08/11/2022</span></div>
        <div class="notif">
            <svg width="18" height="16" viewBox="0 0 18 16"><path d="M0 0h16v12H8l-4 4v-4H0z" fill="#fff"/><path d="M3 4h10M3 7h10M3 10h6" stroke="#333" stroke-width="1"/></svg>
            <span class="notif-badge">3</span>
        </div>
    </div>
</div>

</body>
</html>
```

FILE: styles.css
```css
html, body {
    margin: 0;
    height: 768px;
    overflow: hidden;
}
body {
    width: 1366px;
    display: flex;
    flex-direction: column;
    background: #fff;
    position: relative;
    font-family: 'Open Sans', sans-serif;
}

.top-sliver {
    position: absolute;
    top: 0;
    left: 563px;
    width: 240px;
    height: 1px;
    background: #f2f2f2;
    display: flex;
    justify-content: center;
}
.sliver-mid {
    width: 48px;
    background: #d9562b;
}

/* icones de traco */
.ico {
    fill: none;
    stroke: #1f1f1f;
    stroke-width: 1;
    flex: none;
}
.ico .solid {
    fill: #1f1f1f;
    stroke: none;
}
.ico.thick {
    stroke-width: 1.8;
}
.ico.faded {
    stroke: #c4c4c4;
}
.ico.big {
    stroke-width: 1.5;
}
.ico.grey {
    stroke: #666;
}
.ico.dark {
    stroke: #222;
    stroke-width: 1.1;
}
.ico .thin {
    stroke-width: .8;
}
.ico .white {
    stroke: #fff;
    stroke-width: 1.4;
}
.ico .gear-teeth {
    stroke-width: 1.8;
    stroke-dasharray: 2.5 3;
}

/* abas */
.tabstrip {
    height: 32px;
    background: #cccccc;
    display: flex;
    align-items: stretch;
    flex: none;
}
.tab-side {
    width: 47px;
    display: flex;
    align-items: center;
    justify-content: center;
}
.tab {
    width: 240px;
    background: #f7f7f7;
    border-radius: 8px 8px 0 0;
    display: flex;
    align-items: center;
    padding: 0 16px 0 13px;
    box-sizing: border-box;
}
.tab-title {
    flex: 1;
    margin-left: 8px;
    font-size: 11.5px;
    color: #222;
}
.new-tab {
    width: 36px;
    display: flex;
    align-items: center;
    justify-content: center;
}
.win-controls {
    margin-left: auto;
    display: flex;
}
.win-btn {
    width: 46px;
    display: flex;
    align-items: center;
    justify-content: center;
}

/* barra de endereco */
.toolbar {
    height: 38px;
    background: #f7f7f7;
    display: flex;
    align-items: center;
    flex: none;
}
.tool {
    width: 32px;
    margin-right: 12px;
    display: flex;
    justify-content: center;
    flex: none;
}
.tool-back {
    width: 56px;
    margin-right: 0;
}
.address {
    width: 1074px;
    height: 30px;
    background: #fff;
    border-radius: 15px;
    display: flex;
    align-items: center;
    box-sizing: border-box;
    padding-left: 18px;
    flex: none;
}
.addr-info {
    margin-right: 16px;
}
.url {
    font-size: 13px;
    color: #6e6e6e;
    letter-spacing: .06px;
}
.url b {
    font-weight: normal;
    color: #1a1a1a;
}
.addr-icons {
    margin-left: auto;
    margin-right: 13px;
    display: flex;
    gap: 16px;
}
.tool-right {
    flex: 1;
    display: flex;
    align-items: center;
    padding-left: 17px;
    gap: 25px;
}
.avatar {
    display: flex;
    width: 24px;
}
.dots {
    fill: #222;
    margin-left: -1px;
}

/* conteudo da pagina */
.main {
    flex: 1;
    display: flex;
    min-height: 0;
}
.page {
    flex: 1;
    border-top: 1px solid #c4c4c4;
    padding: 0 8px;
    font-family: 'Liberation Serif', serif;
    color: #000;
}
.page h1 {
    font-size: 32px;
    letter-spacing: .15px;
    margin: 21.44px 0 23px;
}
.page p {
    font-size: 15.13px;
    line-height: 18px;
    margin: 0;
}
.world-def {
    position: absolute;
}
.map {
    margin-top: 17px;
    width: 450px;
    display: grid;
    grid-template-columns: repeat(3, 150px);
    row-gap: 5px;
}
.tile {
    display: block;
    width: 146px;
    height: 85px;
    border: 2px solid #000;
    background: #00bfff;
}
.tile use, .labels {
    filter: blur(.3px);
}

/* cores do mapa */
.land {
    filter: url(#rough);
}
.g, .y, .o, .a, .s {
    stroke: #2c5a3c;
    stroke-width: 1.2;
    stroke-linejoin: round;
}
.g { fill: #92cd4c; }
.y { fill: #ffff33; }
.o { fill: #ff9955; }
.a { fill: #ffb31a; }
.s { fill: #00bfff; }
.lb {
    font-family: 'Liberation Sans', sans-serif;
    font-size: 12.5px;
    fill: #000;
}
.oc {
    font-family: 'Liberation Sans', sans-serif;
    font-size: 13px;
    fill: #0670e0;
}

/* barra lateral */
.sidebar {
    width: 46px;
    flex: none;
    background: #f7f7f7;
    border-left: 1px solid #c8c8c8;
    display: flex;
    flex-direction: column;
    align-items: center;
    justify-content: space-between;
    padding: 14px 0 14px;
    box-sizing: content-box;
}
.side-top {
    display: flex;
    flex-direction: column;
    gap: 24px;
}
.side-plus {
    margin-top: 3px;
}
.side-bottom {
    display: flex;
    flex-direction: column;
    gap: 24px;
    border-top: 1px solid #c8c8c8;
    padding-top: 14px;
    width: 28px;
    align-items: center;
}
.sidebar svg {
    display: block;
}

/* barra de tarefas */
.taskbar {
    height: 40px;
    flex: none;
    background: #272119;
    display: flex;
    align-items: stretch;
    color: #fff;
}
.start {
    width: 48px;
    background: #1c1a16;
    display: flex;
    align-items: center;
    justify-content: center;
}
.search {
    width: 344px;
    box-sizing: border-box;
    background: #f0f0f0;
    border-top: 1px solid #b0b0b0;
    display: flex;
    align-items: center;
    padding-left: 11px;
    position: relative;
    overflow: hidden;
}
.search-text {
    margin-left: 11px;
    font-size: 14.2px;
    color: #2a2a2a;
}
.lanterns {
    position: absolute;
    right: 0;
    bottom: 0;
}
.task-btn {
    width: 49px;
    display: flex;
    align-items: center;
    justify-content: center;
    position: relative;
}
.task-btn.active {
    background: #50504a;
}
.task-btn.running::after {
    content: "";
    position: absolute;
    left: 4px;
    right: 4px;
    bottom: 0;
    height: 2px;
    background: #f8c9a8;
}
.task-btn.active::after {
    left: 0;
    right: 0;
}
.tray {
    margin-left: auto;
    display: flex;
    align-items: center;
    font-size: 13.2px;
}
.weather {
    margin-right: 7px;
}
.temp {
    margin-right: 9px;
}
.forecast {
    margin-right: 24px;
}
.tray-ico {
    fill: none;
    stroke: #fff;
    stroke-width: 1;
    margin-right: 7px;
}
.tray-ico .dim {
    stroke: #999;
}
.lang, .clock {
    display: flex;
    flex-direction: column;
    align-items: center;
    font-size: 11px;
    line-height: 18px;
}
.lang {
    margin: 0 11px 0 -1px;
}
.clock {
    margin-right: 16px;
}
.notif {
    width: 42px;
    height: 40px;
    position: relative;
    display: flex;
    align-items: center;
}
.notif-badge {
    position: absolute;
    right: 14px;
    bottom: 3px;
    width: 15px;
    height: 15px;
    border-radius: 50%;
    background: #333;
    border: 1px solid #888;
    font-size: 11px;
    line-height: 15px;
    text-align: center;
}
```
